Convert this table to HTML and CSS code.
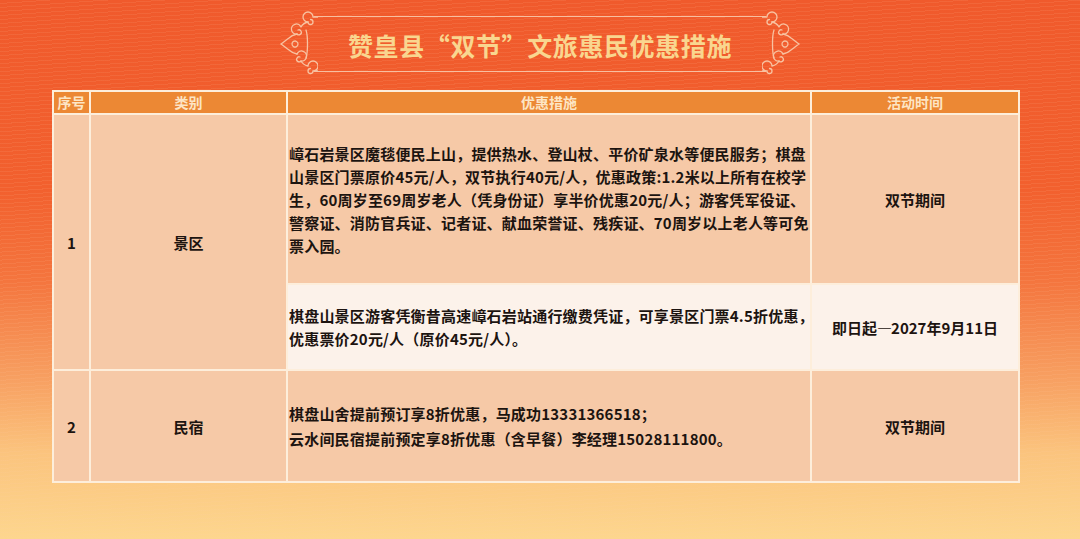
FILE: index.html
```html
<!DOCTYPE html>
<html lang="zh-CN">
<head>
<meta charset="utf-8">
<title>赞皇县“双节”文旅惠民优惠措施</title>
<link rel="stylesheet" href="styles.css">
</head>
<body>
<div class="page">
  <header class="title-bar">
    <svg class="orn orn-left" viewBox="0 0 40 68" width="40" height="70" aria-hidden="true">
      <g fill="none" stroke="#f8c3a2" stroke-width="1.3" stroke-linecap="round">
        <path d="M40,7 H35 M35,7 a5,5 0 1 0 -5,5 a2.5,2.5 0 1 0 2.5,-2.5"/>
        <path d="M30,12 C26,13 24,15 23,17 M23,17 a5,5 0 1 0 -4,7 a2.5,2.5 0 1 0 1,-4"/>
        <path d="M19,24 C15,25 12,27 11,28 C8,30 6,32 3,34 C6,36 8,38 11,40 C12,41 15,43 19,44"/>
        <path d="M14,34 a3,3 0 1 1 0,0.1"/>
        <path d="M19,44 a5,5 0 1 1 4,7 a2.5,2.5 0 1 1 -1,-4"/>
        <path d="M23,51 C24,53 26,55 30,56 M30,56 a5,5 0 1 1 5,5 a2.5,2.5 0 1 1 -2.5,-2.5 M35,61 H40"/>
        <path d="M28,20 C30,26 30,42 28,48"/>
      </g>
    </svg>
    <div class="frame">
      <h1 class="title">赞皇县“双节”文旅惠民优惠措施</h1>
    </div>
    <svg class="orn orn-right" viewBox="0 0 40 68" width="40" height="70" aria-hidden="true">
      <g fill="none" stroke="#f8c3a2" stroke-width="1.3" stroke-linecap="round" transform="translate(40,0) scale(-1,1)">
        <path d="M40,7 H35 M35,7 a5,5 0 1 0 -5,5 a2.5,2.5 0 1 0 2.5,-2.5"/>
        <path d="M30,12 C26,13 24,15 23,17 M23,17 a5,5 0 1 0 -4,7 a2.5,2.5 0 1 0 1,-4"/>
        <path d="M19,24 C15,25 12,27 11,28 C8,30 6,32 3,34 C6,36 8,38 11,40 C12,41 15,43 19,44"/>
        <path d="M14,34 a3,3 0 1 1 0,0.1"/>
        <path d="M19,44 a5,5 0 1 1 4,7 a2.5,2.5 0 1 1 -1,-4"/>
        <path d="M23,51 C24,53 26,55 30,56 M30,56 a5,5 0 1 1 5,5 a2.5,2.5 0 1 1 -2.5,-2.5 M35,61 H40"/>
        <path d="M28,20 C30,26 30,42 28,48"/>
      </g>
    </svg>
  </header>

  <table class="grid">
    <colgroup>
      <col class="c-no">
      <col class="c-type">
      <col class="c-desc">
      <col class="c-time">
    </colgroup>
    <thead>
      <tr class="head">
        <th>序号</th>
        <th>类别</th>
        <th>优惠措施</th>
        <th>活动时间</th>
      </tr>
    </thead>
    <tbody>
      <tr class="r1a">
        <td class="center" rowspan="2">1</td>
        <td class="center" rowspan="2">景区</td>
        <td class="desc">嶂石岩景区魔毯便民上山，提供热水、登山杖、平价矿泉水等便民服务；棋盘<br>山景区门票原价45元/人，双节执行40元/人，优惠政策:1.2米以上所有在校学<br>生，60周岁至69周岁老人（凭身份证）享半价优惠20元/人；游客凭军役证、<br>警察证、消防官兵证、记者证、献血荣誉证、残疾证、70周岁以上老人等可免<br>票入园。</td>
        <td class="center">双节期间</td>
      </tr>
      <tr class="r1b light">
        <td class="desc">棋盘山景区游客凭衡昔高速嶂石岩站通行缴费凭证，可享景区门票4.5折优惠，<br>优惠票价20元/人（原价45元/人）。</td>
        <td class="center">即日起<span class="dash">—</span>2027年9月11日</td>
      </tr>
      <tr class="r2">
        <td class="center">2</td>
        <td class="center">民宿</td>
        <td class="desc wide">棋盘山舍提前预订享8折优惠，马成功13331366518；<br>云水间民宿提前预定享8折优惠（含早餐）李经理15028111800。</td>
        <td class="center">双节期间</td>
      </tr>
    </tbody>
  </table>
</div>
</body>
</html>
```

FILE: styles.css
```css
html, body {
  margin: 0;
  padding: 0;
  width: 1080px;
  height: 539px;
  overflow: hidden;
}

body {
  font-family: "Noto Sans CJK SC", "Noto Sans", sans-serif;
  background:
    repeating-linear-gradient(176deg, rgba(255, 200, 160, 0) 0px, rgba(255, 200, 160, 0) 3px, rgba(255, 205, 170, 0.10) 3px, rgba(255, 205, 170, 0.10) 4px),
    linear-gradient(180deg, #f05a2c 0%, #f2602e 35%, #f4753e 52%, #f79f61 70%, #fbc47e 84%, #fdd68e 100%);
}

.page {
  width: 1080px;
  height: 539px;
  display: flex;
  flex-direction: column;
}

.title-bar {
  height: 90px;
  display: flex;
  align-items: center;
  justify-content: center;
  box-sizing: border-box;
}

.orn {
  display: block;
  flex: none;
  margin-top: -2px;
}

.orn-left { margin-right: -4px; }
.orn-right { margin-left: -4px; }

.frame {
  width: 452px;
  height: 56px;
  margin-top: -2px;
  border-top: 1.5px solid #f8bea0;
  border-bottom: 1.5px solid #f8bea0;
  box-sizing: border-box;
  display: flex;
  align-items: center;
  justify-content: center;
}

.title {
  margin: 0;
  padding-top: 3px;
  font-size: 25px;
  font-weight: 700;
  color: #f9d68f;
  letter-spacing: 0.6px;
  line-height: 1;
  white-space: nowrap;
}

.grid {
  margin-left: 52px;
  width: 966px;
  border-collapse: collapse;
  table-layout: fixed;
  border: 2px solid #fdeedb;
}

.c-no { width: 37px; }
.c-type { width: 197px; }
.c-desc { width: 524px; }
.c-time { width: 208px; }

.grid th,
.grid td {
  border: 2px solid #fdeedb;
  padding: 0;
  vertical-align: middle;
}

.head th {
  height: 21px;
  background: #ec8834;
  color: #fde5c4;
  font-size: 14px;
  font-weight: 700;
  line-height: 21px;
  text-align: center;
}

.grid td {
  background: #f6c9a7;
  color: #1c1410;
  font-size: 15px;
  font-weight: 700;
  line-height: 23px;
}

.grid td.center {
  text-align: center;
}

.grid td.desc {
  padding-left: 1px;
  white-space: nowrap;
  letter-spacing: 0.2px;
}

.grid td.wide {
  line-height: 25px;
}

.dash {
  letter-spacing: -1px;
}

.r1a td { height: 168px; }
.r1b td { height: 84px; }
.r2 td { height: 110px; }

.light td {
  background: #fcf2ea;
}
```
